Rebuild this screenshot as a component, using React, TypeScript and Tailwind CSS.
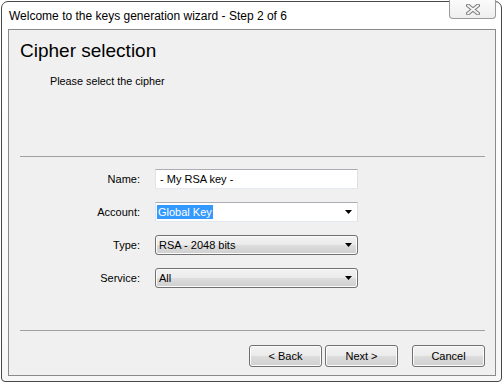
import React from 'react';

// Win7-style wizard dialog, step 2: cipher selection

const font = "font-['Liberation_Sans',Arial,sans-serif]";

const Arrow: React.FC = () => (
  <svg width="7" height="4" viewBox="0 0 7 4" className="shrink-0">
    <path d="M0 0 H7 L3.5 4 Z" fill="#000" />
  </svg>
);

const CloseGlyph: React.FC = () => (
  <svg width="14" height="11" viewBox="0 0 14 11">
    <path d="M2 1.5 L12 9.5 M12 1.5 L2 9.5" stroke="#7d7d7d" strokeWidth="4" strokeLinecap="round" />
    <path d="M2 1.5 L12 9.5 M12 1.5 L2 9.5" stroke="#f4f4f4" strokeWidth="2" strokeLinecap="round" />
  </svg>
);

const Row: React.FC<{ label: string; children: React.ReactNode }> = ({ label, children }) => (
  <div className="flex items-center h-[20px]">
    <span className="w-[131px] text-right text-[11px] text-black">{label}</span>
    <div className="ml-[15px] w-[203px] h-full">{children}</div>
  </div>
);

const Button: React.FC<{ label: string; className?: string }> = ({ label, className }) => (
  <button
    className={`w-[73px] h-[22px] rounded-[3px] border border-[#707070] bg-[linear-gradient(to_bottom,#f2f2f2_0%,#ebebeb_50%,#dddddd_51%,#cfcfcf_100%)] text-[11px] text-black shadow-[inset_0_0_0_1px_#fbfbfb] ${className ?? ''}`}
  >
    {label}
  </button>
);

export default function App() {
  return (
    <div className={`w-[503px] h-[383px] bg-white overflow-hidden ${font}`}>
      <div className="ml-[1px] mt-[1px] w-[501px] h-[381px] border border-[#474747] rounded-t-[7px] rounded-b-[4px] bg-[linear-gradient(to_bottom,#ffffff,#f7f7f7)] flex flex-col pl-[6px] pr-[5px] pb-[5px]">
        {/* Title bar */}
        <div className="h-[27px] flex items-start justify-between">
          <span className="mt-[7px] pl-[1px] text-[12px] leading-[14px] text-black">
            Welcome to the keys generation wizard - Step 2 of 6
          </span>
          <div className="-mt-[2px] w-[47px] h-[19px] border border-t-0 border-[#9a9a9a] rounded-b-[4px] bg-[linear-gradient(to_bottom,#fbfbfb,#eeeeee)] flex items-center justify-center">
            <CloseGlyph />
          </div>
        </div>

        {/* Client area */}
        <div className="flex-1 border border-[#8a8a8a] bg-[#f0f0f0] flex flex-col">
          {/* Header */}
          <div className="h-[126px] pl-[11px] pt-[10px]">
            <h1 className="text-[19px] leading-[22px] text-black">Cipher selection</h1>
            <p className="mt-[13px] ml-[30px] text-[10.8px] leading-[13px] text-black">Please select the cipher</p>
          </div>
          <div className="mx-[11px] mr-[10px] h-px bg-[#a0a0a0]" />

          {/* Form */}
          <div className="mt-[12px] flex flex-col gap-[13px]">
            <Row label="Name:">
              <div className="h-full bg-white border border-[#abadb3] border-l-[#e2e3ea] border-r-[#dbdfe6] border-b-[#e3e9ef] flex items-center pl-[4px] text-[11px]">
                - My RSA key -
              </div>
            </Row>
            <Row label="Account:">
              <div className="h-full bg-white border border-[#abadb3] border-l-[#e2e3ea] border-r-[#dbdfe6] border-b-[#e3e9ef] flex items-center justify-between pl-[1px] pr-[5px] text-[11px]">
                <span className="bg-[#3399ff] text-white h-[14px] leading-[14px] px-[1px]">Global Key</span>
                <Arrow />
              </div>
            </Row>
            <Row label="Type:">
              <div className="h-full rounded-[3px] border border-[#707070] bg-[linear-gradient(to_bottom,#f2f2f2_0%,#ebebeb_50%,#dddddd_51%,#cfcfcf_100%)] shadow-[inset_0_0_0_1px_#fcfcfc] flex items-center justify-between pl-[3px] pr-[5px] text-[11px]">
                <span>RSA - 2048 bits</span>
                <Arrow />
              </div>
            </Row>
            <Row label="Service:">
              <div className="h-full rounded-[3px] border border-[#707070] bg-[linear-gradient(to_bottom,#f2f2f2_0%,#ebebeb_50%,#dddddd_51%,#cfcfcf_100%)] shadow-[inset_0_0_0_1px_#fcfcfc] flex items-center justify-between pl-[3px] pr-[5px] text-[11px]">
                <span>All</span>
                <Arrow />
              </div>
            </Row>
          </div>

          {/* Footer */}
          <div className="mt-auto">
            <div className="mx-[11px] mr-[10px] h-px bg-[#a0a0a0]" />
            <div className="mt-[14px] mb-[8px] mr-[10px] flex justify-end">
              <Button label="< Back" />
              <Button label="Next >" className="ml-[3px]" />
              <Button label="Cancel" className="ml-[14px]" />
            </div>
          </div>
        </div>
      </div>
    </div>
  );
}
